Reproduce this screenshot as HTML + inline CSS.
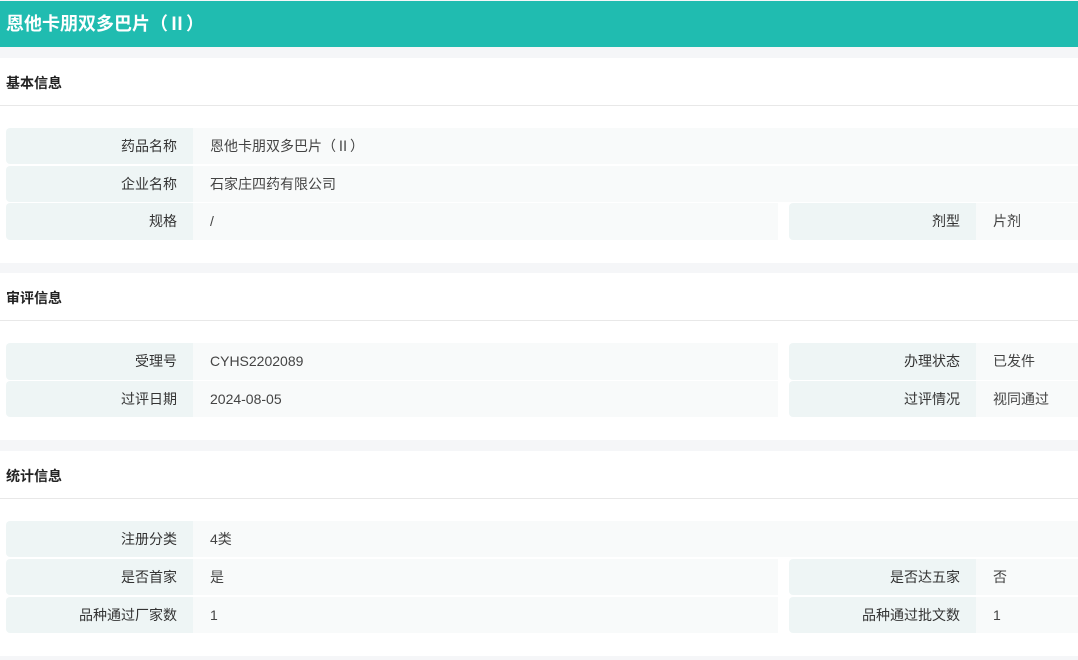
<!DOCTYPE html>
<html><head><meta charset="utf-8"><style>
*{margin:0;padding:0;box-sizing:border-box}
body{width:1078px;height:660px;background:#f5f6f8;font-family:"Liberation Sans","Noto Sans CJK SC",sans-serif;position:relative;overflow:hidden;color:#333}
.hd{position:absolute;left:0;top:1px;width:1078px;height:46px;background:#20bcb0;color:#fff;font-weight:bold;font-size:18px;line-height:46px;padding-left:6px}
.sec{position:absolute;left:0;width:1078px;background:#fff}
.st{position:absolute;left:6px;font-size:14px;font-weight:bold;color:#222}
.ln{position:absolute;left:0;width:1078px;height:1px;background:#e8e8e8}
.l,.v{position:absolute;height:37px;line-height:37px;font-size:14px}
.l{background:#eef5f5;text-align:right;padding-right:16px;border-radius:4px 0 0 4px;color:#333}
.v{background:#f8fafa;padding-left:17px;color:#444}
</style></head><body>
<div class="hd">恩他卡朋双多巴片（Ⅱ）</div>

<div class="sec" style="top:58px;height:205px">
<div class="st" style="top:15px">基本信息</div>
<div class="ln" style="top:47px"></div>
</div>
<div class="l" style="left:6px;top:128px;width:187px;height:36px;line-height:36px">药品名称</div><div class="v" style="left:193px;top:128px;width:885px;height:36px;line-height:36px">恩他卡朋双多巴片（Ⅱ）</div>
<div class="l" style="left:6px;top:166px;width:187px;height:36px;line-height:36px">企业名称</div><div class="v" style="left:193px;top:166px;width:885px;height:36px;line-height:36px">石家庄四药有限公司</div>
<div class="l" style="left:6px;top:203px;width:187px">规格</div><div class="v" style="left:193px;top:203px;width:585px">/</div>
<div class="l" style="left:789px;top:203px;width:187px">剂型</div><div class="v" style="left:976px;top:203px;width:102px">片剂</div>

<div class="sec" style="top:273px;height:167px">
<div class="st" style="top:15px">审评信息</div>
<div class="ln" style="top:47px"></div>
</div>
<div class="l" style="left:6px;top:343px;width:187px">受理号</div><div class="v" style="left:193px;top:343px;width:585px">CYHS2202089</div>
<div class="l" style="left:789px;top:343px;width:187px">办理状态</div><div class="v" style="left:976px;top:343px;width:102px">已发件</div>
<div class="l" style="left:6px;top:381px;width:187px;height:36px">过评日期</div><div class="v" style="left:193px;top:381px;width:585px;height:36px">2024-08-05</div>
<div class="l" style="left:789px;top:381px;width:187px;height:36px">过评情况</div><div class="v" style="left:976px;top:381px;width:102px;height:36px">视同通过</div>

<div class="sec" style="top:451px;height:205px">
<div class="st" style="top:15px">统计信息</div>
<div class="ln" style="top:47px"></div>
</div>
<div class="l" style="left:6px;top:521px;width:187px;height:36px;line-height:36px">注册分类</div><div class="v" style="left:193px;top:521px;width:885px;height:36px;line-height:36px">4类</div>
<div class="l" style="left:6px;top:559px;width:187px;height:36px;line-height:36px">是否首家</div><div class="v" style="left:193px;top:559px;width:585px;height:36px;line-height:36px">是</div>
<div class="l" style="left:789px;top:559px;width:187px;height:36px;line-height:36px">是否达五家</div><div class="v" style="left:976px;top:559px;width:102px;height:36px;line-height:36px">否</div>
<div class="l" style="left:6px;top:597px;width:187px;height:36px;line-height:36px">品种通过厂家数</div><div class="v" style="left:193px;top:597px;width:585px;height:36px;line-height:36px">1</div>
<div class="l" style="left:789px;top:597px;width:187px;height:36px;line-height:36px">品种通过批文数</div><div class="v" style="left:976px;top:597px;width:102px;height:36px;line-height:36px">1</div>
</body></html>
